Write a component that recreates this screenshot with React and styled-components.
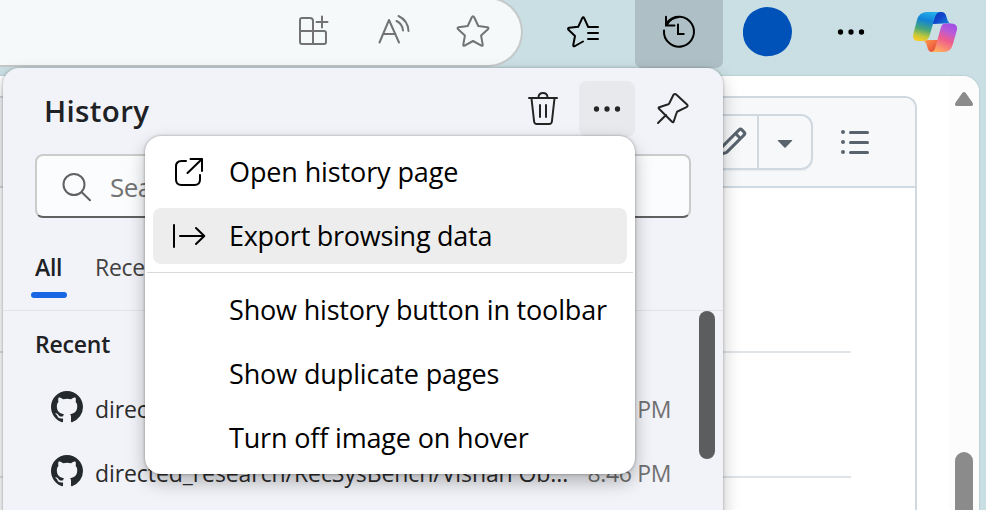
import React from "react";
import styled, { createGlobalStyle } from "styled-components";

const GlobalStyle = createGlobalStyle`
  * { box-sizing: border-box; }
  body { margin: 0; overflow: hidden; font-family: "Open Sans", "Noto Sans", sans-serif; }
`;

const Browser = styled.div`
  position: relative;
  width: 986px;
  height: 510px;
  overflow: hidden;
  background: #cadfe3;
  display: flex;
  flex-direction: column;
`;

const Toolbar = styled.header`
  display: flex;
  height: 76px;
  flex: none;
`;

const AddressBar = styled.div`
  display: flex;
  align-items: center;
  justify-content: flex-end;
  gap: 48px;
  width: 523px;
  height: 70px;
  margin: -3px 12px 0 0;
  padding: 1px 32px 3px 0;
  background: #f5f9fa;
  border: 2px solid #c5c8c9;
  border-left: 0;
  border-radius: 0 35px 35px 0;
`;

const ToolButton = styled.div`
  display: flex;
  align-items: center;
  justify-content: center;
  width: ${(p) => p.$width}px;
  height: 68px;
  padding-bottom: 4px;
  margin-left: ${(p) => p.$gap || 0}px;
  border-radius: 0 0 7px 7px;
  background: ${(p) => (p.$active ? "#aec0c6" : "transparent")};
`;

const Icon = styled.svg`
  display: block;
  flex: none;
  overflow: visible;
  fill: none;
  stroke: ${(p) => p.$color || "#000"};
  stroke-width: ${(p) => p.$weight || 2};
  stroke-linecap: round;
  stroke-linejoin: round;
`;

const SolidIcon = styled.svg`
  display: block;
  flex: none;
  fill: ${(p) => p.$color};
`;

const Page = styled.main`
  display: flex;
  flex: 1;
  width: 979px;
  background: #fff;
  border-radius: 0 16px 0 0;
  box-shadow: 0 0 2px #9db2b8;
  overflow: hidden;
`;

const Document = styled.div`
  flex: 1;
  padding: 20px 32px 0 0;
`;

const Card = styled.section`
  height: 420px;
  border: 2px solid #d0d9e0;
  border-width: 2px 2px 0 0;
  border-radius: 0 12px 0 0;
`;

const CardHeader = styled.div`
  display: flex;
  justify-content: flex-end;
  align-items: center;
  height: 90px;
  padding: 0 44px 0 0;
  gap: 26px;
  background: #f6f8fa;
  border-bottom: 2px solid #d0d9e0;
  border-radius: 0 10px 0 0;
`;

const SplitButton = styled.div`
  display: flex;
  height: 56px;
  border: 2px solid #d0d9e0;
  border-radius: 12px;
  box-shadow: 0 1px 1px #e9edf0;
`;

const SplitPart = styled.div`
  display: flex;
  align-items: center;
  justify-content: center;
  width: ${(p) => p.$width}px;
  & + & { border-left: 2px solid #d0d9e0; }
`;

const Rule = styled.div`
  height: 2px;
  width: 851px;
  margin-top: ${(p) => p.$top}px;
  background: #dfe4e8;
`;

const PageScroll = styled.div`
  display: flex;
  flex-direction: column;
  justify-content: space-between;
  align-items: center;
  width: 30px;
  padding: 16px 0 0;
  background: #fcfcfc;
`;

const PageThumb = styled.div`
  width: 18px;
  height: 58px;
  border-radius: 9px 9px 0 0;
  background: #8b8b8b;
`;

const Flyout = styled.aside`
  position: absolute;
  left: 3px;
  top: 68px;
  width: 720px;
  height: 460px;
  background: #f2f3f8;
  border-radius: 16px 16px 0 0;
  box-shadow: 0 0 3px rgba(0, 0, 0, 0.3), 0 8px 18px rgba(0, 0, 0, 0.24);
`;

const FlyoutHeader = styled.div`
  display: flex;
  align-items: center;
  height: 86px;
  padding: 0 34px 4px 41px;
`;

const Title = styled.h1`
  flex: 1;
  margin: 0;
  padding-top: 4px;
  font-size: 29.5px;
  line-height: 40px;
  font-weight: 600;
  letter-spacing: 0.35px;
  color: #202124;
`;

const MoreButton = styled.div`
  display: flex;
  align-items: center;
  justify-content: center;
  width: 56px;
  height: 56px;
  margin: 0 22px 0 21px;
  border-radius: 8px;
  background: #e8e9ed;
`;

const SearchBox = styled.div`
  display: flex;
  align-items: center;
  gap: 18px;
  height: 64px;
  margin: 0 32px;
  padding: 1px 24px 0 25px;
  background: #fbfcfe;
  border: 2px solid #cbcbcb;
  border-bottom-color: #616161;
  border-radius: 8px;
  font-size: 26px;
  letter-spacing: -0.6px;
  color: #737373;
`;

const Tabs = styled.nav`
  display: flex;
  gap: 20px;
  height: 93px;
  padding: 28px 28px 0;
  border-bottom: 1px solid #e2e3e6;
`;

const Tab = styled.div`
  height: 51px;
  padding: 0 4px;
  font-size: 23px;
  line-height: 42px;
  letter-spacing: -0.3px;
  white-space: nowrap;
  color: ${(p) => (p.$selected ? "#202124" : "#424242")};
  font-weight: ${(p) => (p.$selected ? 600 : 400)};
  &::after {
    content: "";
    display: ${(p) => (p.$selected ? "block" : "none")};
    width: 36px;
    height: 6px;
    margin: 4px 0 0 -4px;
    border-radius: 3px;
    background: #1966e5;
  }
`;

const Results = styled.div`
  display: flex;
  justify-content: space-between;
  padding-right: 8px;
`;

const ResultList = styled.div`
  width: 668px;
  padding-left: 32px;
`;

const SectionTitle = styled.h2`
  margin: 0;
  height: 64px;
  padding-top: 12px;
  font-size: 23px;
  line-height: 42px;
  font-weight: 600;
  letter-spacing: -0.2px;
  color: #202124;
`;

const HistoryRow = styled.div`
  display: flex;
  align-items: center;
  height: 64px;
  padding-left: 16px;
  font-size: 23px;
  color: #2b2b2b;
`;

const HistoryLabel = styled.span`
  width: 476px;
  margin-left: 12px;
  padding-top: 3px;
  letter-spacing: -0.08px;
  white-space: nowrap;
`;

const HistoryTime = styled.span`
  flex: 1;
  padding-top: 3px;
  text-align: right;
  letter-spacing: -0.35px;
  color: #707070;
`;

const FlyoutThumb = styled.div`
  width: 16px;
  height: 148px;
  border-radius: 8px;
  background: #5c5d5e;
`;

const Menu = styled.div`
  position: absolute;
  left: 145px;
  top: 136px;
  width: 490px;
  height: 338px;
  padding: 8px 0;
  border-radius: 16px;
  background: #fff;
  box-shadow: 0 0 3px rgba(0, 0, 0, 0.35), 0 8px 18px rgba(0, 0, 0, 0.27);
`;

const MenuItem = styled.div`
  display: grid;
  grid-template-columns: 57px 1fr;
  align-items: center;
  height: 56px;
  margin: 0 8px 8px;
  padding-left: 19px;
  border-radius: 8px;
  background: ${(p) => (p.$hover ? "#ededed" : "transparent")};
  color: #000;
`;

const MenuLabel = styled.span`
  grid-column: 2;
  font-size: 27px;
  line-height: 36px;
  white-space: nowrap;
  letter-spacing: ${(p) => p.$tracking || 0}px;
`;

const Separator = styled.div`
  height: 1px;
  margin: 0 2px 9px;
  background: #d9d9d9;
`;

const AppsIcon = () => (
  <Icon width="32" height="32" viewBox="297 16 32 32" $color="#737373">
    <path d="M313 45V22q0-3-3-3h-8q-2 0-2 2v22q0 2 2 2h22q2 0 2-2v-9q0-2-2-2h-24M322 17.5v11M316.500 23h11" />
  </Icon>
);

const ReadAloudIcon = () => (
  <Icon width="32" height="32" viewBox="377 16 32 32" $color="#737373">
    <path d="M379.500 43.500L389 21l10 22.500M383 35h12.500M396.500 22q6 3 6.500 9.500M398.500 17q9.500 4.500 10 15" />
  </Icon>
);

const StarIcon = () => (
  <Icon width="32" height="32" viewBox="457 16 32 32" $color="#737373">
    <path d="M471.700 18.500q1.300-2.500 2.600 0l4 8.500 9 1.300q2 .5.600 2l-6.800 6.300 1.600 9q.2 1.600-1.300 1L473 42l-8.400 4.600q-1.500.6-1.300-1l1.600-9-6.800-6.300q-1.400-1.500.6-2l9-1.300z" />
  </Icon>
);

const FavoritesIcon = () => (
  <Icon width="32" height="32" viewBox="567 16 32 32">
    <path d="M583 41.500l-8 4.500q-2 1-1.700-1.200L575 36l-6.500-6.200q-1.200-1.500.7-2l9-1 4-8.600q1-1.900 2 0l4 8.800H598M588 33h10M588 39h10" />
  </Icon>
);

const HistoryIcon = () => (
  <Icon width="32" height="34" viewBox="663 15 32 34">
    <path d="M664 30.500a15 15 0 1 0 3.500-8.500M666 16.700v8.800h8.500M667 24.500A15 15 0 0 1 679 17M678 24.500V34h5.700" strokeLinejoin="miter" />
  </Icon>
);

const Dots = ({ color }) => (
  <SolidIcon width="28" height="6" viewBox="0 0 28 6" $color={color}>
    <circle cx="3.500" cy="3" r="2.650" /><circle cx="14" cy="3" r="2.650" /><circle cx="24.500" cy="3" r="2.650" />
  </SolidIcon>
);

const Avatar = () => (
  <SolidIcon width="50" height="50" viewBox="743 6 50 50" $color="#0052b9">
    <path d="M767 6q10 0 17 6.500 3 2 4.500 6 3.500 6 3.500 12.500 0 6-3 12-4 7-11 10-6 2.500-13 2.200-8-1.200-13-5.200-8-6-9-16-.7-9 3-15 3-7 10-10 5-3 11-3z" />
  </SolidIcon>
);

const CopilotIcon = () => (
  <SolidIcon width="46" height="42" viewBox="912 11 46 42">
    <defs>
      <linearGradient id="cpA" x1=".6" y1="0" x2=".35" y2="1">
        <stop offset="0" stopColor="#22aee9" /><stop offset=".3" stopColor="#1083d8" />
        <stop offset=".62" stopColor="#4da876" /><stop offset=".85" stopColor="#c3c83a" /><stop offset="1" stopColor="#f5ca29" />
      </linearGradient>
      <linearGradient id="cpB" x1=".7" y1="0" x2=".3" y2="1">
        <stop offset="0" stopColor="#a34ee5" /><stop offset=".25" stopColor="#b95bd8" />
        <stop offset=".55" stopColor="#f05d8d" /><stop offset="1" stopColor="#ffad5e" />
      </linearGradient>
      <linearGradient id="cpC" x1="0" y1=".2" x2="1" y2=".8">
        <stop offset="0" stopColor="#0b35b3" /><stop offset=".5" stopColor="#1244cc" /><stop offset="1" stopColor="#1689dc" />
      </linearGradient>
      <linearGradient id="cpD" x1="0" y1="0" x2="1" y2=".8">
        <stop offset="0" stopColor="#ffa04e" /><stop offset=".6" stopColor="#f26a43" /><stop offset="1" stopColor="#d94535" />
      </linearGradient>
    </defs>
    <path fill="url(#cpC)" d="M929 12h12.500q3.500 0 4.700 4l1.300 4.200q1 3 4 3.300h-7q-6 0-11.500.5z" />
    <path fill="url(#cpD)" d="M923 40.700q2.500.3 3.700 4.300l1 3.500q1.200 3.500 4.300 3.500 3.200 0 4.300-4l2-8h-10z" />
    <path fill="url(#cpA)" d="M927 12h14q-4.500 0-6 5l-5.500 19q-1.500 5-6.500 5h-4.500q-7 0-5-8l3.500-13q2.200-8 10-8z" />
    <path fill="url(#cpB)" d="M944.500 23.500h6q8 0 6.300 7l-4 14q-2 7.500-9 7.500H931q3.200-.5 4.300-4.500l5-18q1.300-6 4.200-6z" />
  </SolidIcon>
);

const TrashIcon = () => (
  <Icon width="30" height="34" viewBox="528 92 30 34" $color="#242424">
    <path d="M529 98h28M531.500 98.500l2.600 23q.3 2.500 2.700 2.500h12.400q2.400 0 2.700-2.500l2.600-23M538.500 97q.4-4 4.500-4t4.500 4M540 105v12M546 105v12" />
  </Icon>
);

const PinIcon = () => (
  <Icon width="32" height="32" viewBox="657 92 32 32" $color="#242424">
    <path d="M658 122l8-8M673.500 93.700q1.500-1.400 3 0l10.500 9.800q1.500 1.500-.5 2.700l-9 4.300q-.6.300-.8 1l-3 9q-.6 1.300-1.700.3l-13-13q-1-1 .3-1.600l9-3q.8-.3 1-1z" />
  </Icon>
);

const SearchIcon = () => (
  <Icon width="30" height="30" viewBox="62 171 30 30" $color="#616161">
    <circle cx="74" cy="183.500" r="10.500" /><path d="M82 191.500l8 7.700" />
  </Icon>
);

const OpenIcon = () => (
  <Icon width="30" height="30" viewBox="172 157 30 30">
    <path d="M186 161h-4.500q-5.500 0-5.500 5.500v13q0 5.500 5.500 5.500h13q5.500 0 5.500-5.500V175M190.500 159H202v12M202 159l-14.500 14" />
  </Icon>
);

const ExportIcon = () => (
  <Icon width="34" height="26" viewBox="172 223 34 26">
    <path d="M174 225v22M180 236h24M196 228l8.300 8-8.300 8" />
  </Icon>
);

const PencilIcon = () => (
  <SolidIcon width="32" height="32" viewBox="0 0 16 16" $color="#59636e">
    <path d="M11.013 1.427a1.75 1.75 0 0 1 2.474 0l1.086 1.086a1.75 1.75 0 0 1 0 2.474l-8.61 8.61c-.21.21-.47.364-.756.445l-3.251.93a.75.75 0 0 1-.927-.928l.929-3.25c.081-.286.235-.547.445-.758l8.61-8.61Zm.176 4.823L9.75 4.81l-6.286 6.287a.253.253 0 0 0-.064.108l-.558 1.953 1.953-.558a.253.253 0 0 0 .108-.064Zm1.238-3.763a.25.25 0 0 0-.354 0L10.811 3.75l1.439 1.44 1.263-1.263a.25.25 0 0 0 0-.354Z" />
  </SolidIcon>
);

const CaretIcon = () => (
  <SolidIcon width="32" height="32" viewBox="0 0 16 16" $color="#59636e">
    <path d="m4.427 7.427 3.396 3.396a.25.25 0 0 0 .354 0l3.396-3.396A.25.25 0 0 0 11.396 7H4.604a.25.25 0 0 0-.177.427Z" />
  </SolidIcon>
);

const ListIcon = () => (
  <SolidIcon width="32" height="32" viewBox="0 0 16 16" $color="#59636e">
    <path d="M5.75 2.5h8.5a.75.75 0 0 1 0 1.5h-8.5a.75.75 0 0 1 0-1.5Zm0 5h8.5a.75.75 0 0 1 0 1.5h-8.5a.75.75 0 0 1 0-1.5Zm0 5h8.5a.75.75 0 0 1 0 1.5h-8.5a.75.75 0 0 1 0-1.5ZM2 14a1 1 0 1 1 0-2 1 1 0 0 1 0 2Zm1-6a1 1 0 1 1-2 0 1 1 0 0 1 2 0ZM2 4a1 1 0 1 1 0-2 1 1 0 0 1 0 2Z" />
  </SolidIcon>
);

const GitHubIcon = () => (
  <SolidIcon width="32" height="32" viewBox="0 0 16 16" $color="#24292e">
    <path d="M8 0C3.58 0 0 3.58 0 8c0 3.54 2.29 6.53 5.47 7.59.4.07.55-.17.55-.38 0-.19-.01-.82-.01-1.49-2.01.37-2.53-.49-2.69-.94-.09-.23-.48-.94-.82-1.13-.28-.15-.68-.52-.01-.53.63-.01 1.08.58 1.23.82.72 1.21 1.87.87 2.33.66.07-.52.28-.87.51-1.07-1.78-.2-3.64-.89-3.64-3.95 0-.87.31-1.59.82-2.15-.08-.2-.36-1.02.08-2.12 0 0 .67-.21 2.2.82.64-.18 1.32-.27 2-.27s1.36.09 2 .27c1.53-1.04 2.2-.82 2.2-.82.44 1.1.16 1.92.08 2.12.51.56.82 1.27.82 2.15 0 3.07-1.87 3.75-3.65 3.95.29.25.54.73.54 1.48 0 1.07-.01 1.93-.01 2.2 0 .21.15.46.55.38A8.01 8.01 0 0 0 16 8c0-4.42-3.58-8-8-8Z" />
  </SolidIcon>
);

const ScrollUpIcon = () => (
  <SolidIcon width="18" height="14" viewBox="955 92 18 14" $color="#8b8b8b">
    <path d="M962.200 93q1.800-2 3.600 0l6.600 9.500q1.800 3.300-1.200 3.500h-14.400q-3-.2-1.200-3.500z" />
  </SolidIcon>
);

export default function App() {
  return (
    <Browser>
      <GlobalStyle />
      <Toolbar>
        <AddressBar>
          <AppsIcon />
          <ReadAloudIcon />
          <StarIcon />
        </AddressBar>
        <ToolButton $width={96}><FavoritesIcon /></ToolButton>
        <ToolButton $width={88} $gap={4} $active><HistoryIcon /></ToolButton>
        <ToolButton $width={89}><Avatar /></ToolButton>
        <ToolButton $width={78}><Dots color="#000" /></ToolButton>
        <ToolButton $width={90}><CopilotIcon /></ToolButton>
      </Toolbar>

      <Page>
        <Document>
          <Card>
            <CardHeader>
              <SplitButton>
                <SplitPart $width={50}><PencilIcon /></SplitPart>
                <SplitPart $width={54}><CaretIcon /></SplitPart>
              </SplitButton>
              <ListIcon />
            </CardHeader>
            <Rule $top={163} />
            <Rule $top={123} />
          </Card>
        </Document>
        <PageScroll>
          <ScrollUpIcon />
          <PageThumb />
        </PageScroll>
      </Page>

      <Flyout>
        <FlyoutHeader>
          <Title>History</Title>
          <TrashIcon />
          <MoreButton><Dots color="#242424" /></MoreButton>
          <PinIcon />
        </FlyoutHeader>
        <SearchBox><SearchIcon />Search history</SearchBox>
        <Tabs>
          <Tab $selected>All</Tab>
          <Tab>Recently closed</Tab>
        </Tabs>
        <Results>
          <ResultList>
            <SectionTitle>Recent</SectionTitle>
            <HistoryRow>
              <GitHubIcon />
              <HistoryLabel>directed_research</HistoryLabel>
              <HistoryTime>8:46 PM</HistoryTime>
            </HistoryRow>
            <HistoryRow>
              <GitHubIcon />
              <HistoryLabel>directed_research/RecSysBench/Vishan Ob...</HistoryLabel>
              <HistoryTime>8:46 PM</HistoryTime>
            </HistoryRow>
          </ResultList>
          <FlyoutThumb />
        </Results>
      </Flyout>

      <Menu>
        <MenuItem><OpenIcon /><MenuLabel $tracking={-0.12}>Open history page</MenuLabel></MenuItem>
        <MenuItem $hover><ExportIcon /><MenuLabel $tracking={-0.26}>Export browsing data</MenuLabel></MenuItem>
        <Separator />
        <MenuItem><MenuLabel $tracking={-0.18}>Show history button in toolbar</MenuLabel></MenuItem>
        <MenuItem><MenuLabel $tracking={-0.12}>Show duplicate pages</MenuLabel></MenuItem>
        <MenuItem><MenuLabel $tracking={-0.16}>Turn off image on hover</MenuLabel></MenuItem>
      </Menu>
    </Browser>
  );
}
